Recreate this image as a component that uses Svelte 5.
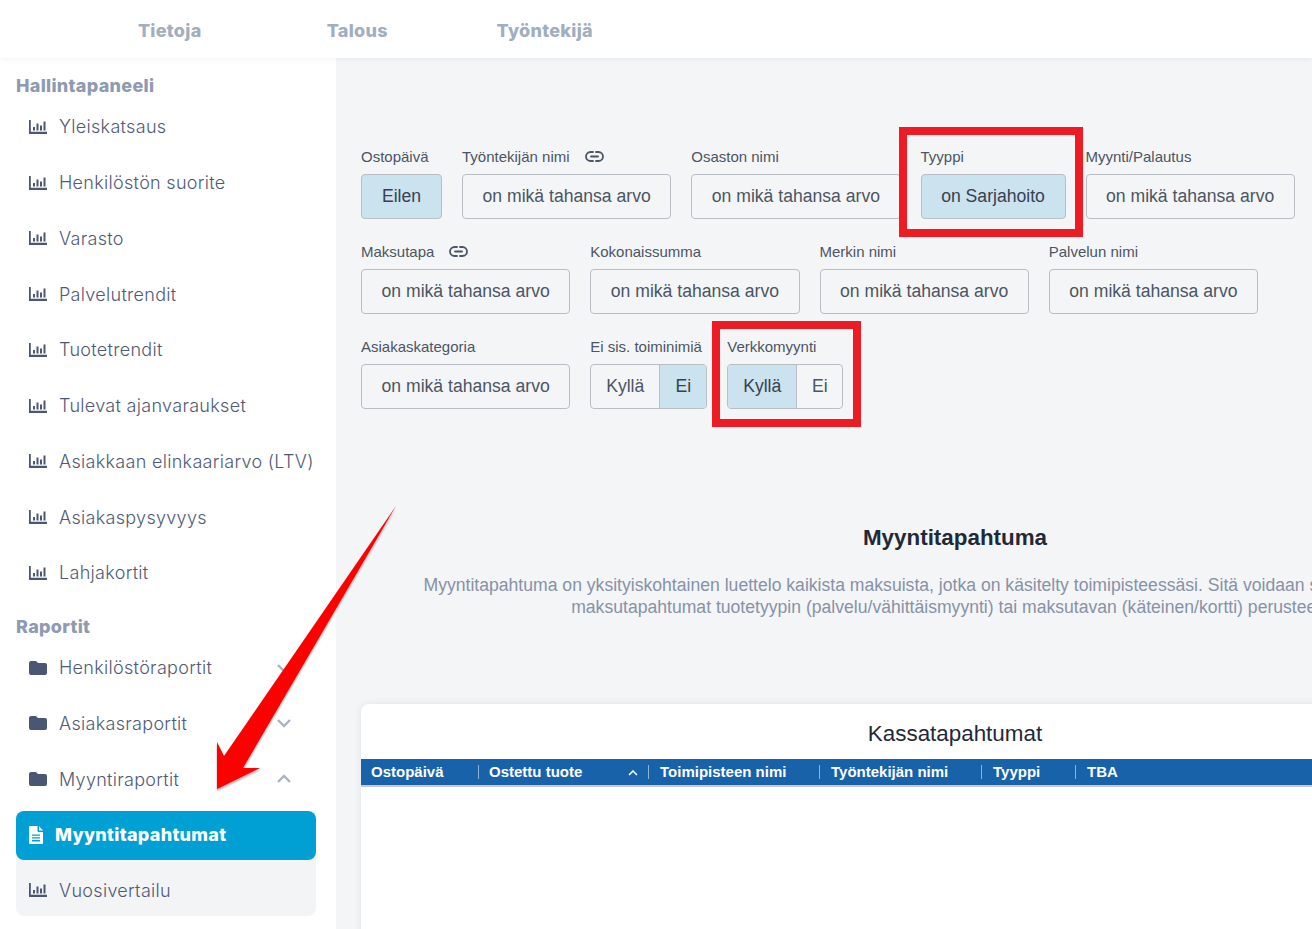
<script lang="ts">
	const tabs = ['Tietoja', 'Talous', 'Työntekijä'];
	const dashboards = [
		'Yleiskatsaus',
		'Henkilöstön suorite',
		'Varasto',
		'Palvelutrendit',
		'Tuotetrendit',
		'Tulevat ajanvaraukset',
		'Asiakkaan elinkaariarvo (LTV)',
		'Asiakaspysyvyys',
		'Lahjakortit'
	];
	const folders = [
		{ name: 'Henkilöstöraportit', open: false },
		{ name: 'Asiakasraportit', open: false },
		{ name: 'Myyntiraportit', open: true }
	];
	const any = 'on mikä tahansa arvo';
	const rows = [
		[
			{ label: 'Ostopäivä', value: 'Eilen', active: true, width: 81 },
			{ label: 'Työntekijän nimi', value: any, link: true },
			{ label: 'Osaston nimi', value: any },
			{ label: 'Tyyppi', value: 'on Sarjahoito', active: true, width: 145 },
			{ label: 'Myynti/Palautus', value: any }
		],
		[
			{ label: 'Maksutapa', value: any, link: true },
			{ label: 'Kokonaissumma', value: any },
			{ label: 'Merkin nimi', value: any },
			{ label: 'Palvelun nimi', value: any }
		]
	];
	const columns = [
		{ name: 'Ostopäivä', width: 117 },
		{ name: 'Ostettu tuote', width: 170, sorted: true },
		{ name: 'Toimipisteen nimi', width: 171 },
		{ name: 'Työntekijän nimi', width: 162 },
		{ name: 'Tyyppi', width: 94 },
		{ name: 'TBA', width: 120 }
	];
</script>

{#snippet chartIcon()}
	<svg class="icon" viewBox="0 0 18 14" width="18" height="14" aria-hidden="true">
		<path d="M0 0h1.800v11.800H18V14H0z" fill="currentColor" />
		<path d="M4 7h2v3.500H4zM7.500 3.500h2v7h-2zM11 5.500h2v5h-2zM14.500 1.500h2v9h-2z" fill="currentColor" />
	</svg>
{/snippet}

{#snippet linkIcon()}
	<svg class="link-icon" viewBox="0 0 19 11" width="19" height="11" aria-hidden="true">
		<path
			d="M8 1H5.500a4.500 4.500 0 0 0 0 9H8M11 1h2.500a4.500 4.500 0 0 1 0 9H11M6 5.500h7"
			fill="none"
			stroke="currentColor"
			stroke-width="1.800"
			stroke-linecap="round"
		/>
	</svg>
{/snippet}

{#snippet filter(f)}
	<div class="filter" style:width={f.width ? f.width + 'px' : null}>
		<div class="label">
			{f.label}
			{#if f.link}{@render linkIcon()}{/if}
		</div>
		<button class="value" class:active={f.active}>{f.value}</button>
	</div>
{/snippet}

{#snippet toggle(label, yes)}
	<div class="filter auto">
		<div class="label">{label}</div>
		<div class="toggle">
			<span class="yes" class:active={yes}>Kyllä</span>
			<span class="no" class:active={!yes}>Ei</span>
		</div>
	</div>
{/snippet}

<div class="page">
	<header class="topbar">
		{#each tabs as tab}
			<span class="tab">{tab}</span>
		{/each}
	</header>

	<div class="body">
		<aside class="sidebar">
			<h2>Hallintapaneeli</h2>
			{#each dashboards as item}
				<div class="item">{@render chartIcon()}<span>{item}</span></div>
			{/each}

			<h2 class="second">Raportit</h2>
			{#each folders as folder}
				<div class="item">
					<svg class="icon" viewBox="0 0 18 14" width="18" height="14" aria-hidden="true">
						<path
							d="M2 0h5l2 2h7a2 2 0 0 1 2 2v8a2 2 0 0 1-2 2H2a2 2 0 0 1-2-2V2a2 2 0 0 1 2-2z"
							fill="currentColor"
						/>
					</svg>
					<span>{folder.name}</span>
					<svg class="chevron" viewBox="0 0 16 10" width="16" height="10" aria-hidden="true">
						<path
							d={folder.open ? 'M2 8l6-6 6 6' : 'M2 2l6 6 6-6'}
							fill="none"
							stroke="currentColor"
							stroke-width="2.400"
						/>
					</svg>
				</div>
			{/each}

			<div class="subgroup">
				<div class="current">
					<svg viewBox="0 0 14 18" width="14" height="18" aria-hidden="true">
						<path
							d="M1 0h7.500v5a1 1 0 0 0 1 1H14v11a1 1 0 0 1-1 1H1a1 1 0 0 1-1-1V1a1 1 0 0 1 1-1zM10 0l4 4.500h-4zM3 8.500v1.300h8V8.500zM3 11.300v1.300h8v-1.300zM3 14.100v1.300h8v-1.300z"
							fill="#fff"
							fill-rule="evenodd"
						/>
					</svg>
					<span>Myyntitapahtumat</span>
				</div>
				<div class="item sub">{@render chartIcon()}<span>Vuosivertailu</span></div>
			</div>
		</aside>

		<main class="main">
			<section class="filters">
				{#each rows as row}
					<div class="filter-row">
						{#each row as f}{@render filter(f)}{/each}
					</div>
				{/each}
				<div class="filter-row">
					{@render filter({ label: 'Asiakaskategoria', value: any })}
					{@render toggle('Ei sis. toiminimiä', false)}
					{@render toggle('Verkkomyynti', true)}
				</div>
			</section>

			<section class="intro">
				<h1>Myyntitapahtuma</h1>
				<p>
					Myyntitapahtuma on yksityiskohtainen luettelo kaikista maksuista, jotka on käsitelty toimipisteessäsi. Sitä voidaan suodattamalla näyttää,<br />
					maksutapahtumat tuotetyypin (palvelu/vähittäismyynti) tai maksutavan (käteinen/kortti) perusteella.
				</p>
			</section>

			<section class="card">
				<div class="card-title">Kassatapahtumat</div>
				<div class="table-head">
					{#each columns as col}
						<div class="col" style:width="{col.width}px">
							{col.name}
							{#if col.sorted}
								<svg viewBox="0 0 10 6" width="10" height="6" aria-hidden="true">
									<path d="M1 5l4-4 4 4" fill="none" stroke="#fff" stroke-width="1.600" />
								</svg>
							{/if}
						</div>
					{/each}
				</div>
			</section>
		</main>
	</div>

	<div class="mark mark-type"></div>
	<div class="mark mark-online"></div>
	<svg class="arrow" viewBox="0 0 1312 929" width="1312" height="929" aria-hidden="true">
		<polygon points="396,506 243,768 260,768 217,789 217,742 224,756" fill="#fe0000" />
	</svg>
</div>

<style>
	:global(body) {
		margin: 0;
		background: #f4f5f7;
	}

	.page {
		position: relative;
		width: 1312px;
		height: 929px;
		overflow: hidden;
		font-family: 'Liberation Sans', Arial, sans-serif;
	}

	.topbar {
		position: relative;
		z-index: 1;
		display: flex;
		height: 58px;
		padding-left: 76px;
		align-items: center;
		background: #fff;
		box-shadow: 0 1px 6px rgba(0, 0, 0, 0.06);
	}

	.tab {
		width: 187.500px;
		margin-top: 3px;
		text-align: center;
		font-family: Inter, sans-serif;
		font-size: 18px;
		font-weight: 800;
		letter-spacing: 0.300px;
		color: #a0aec0;
	}

	.body {
		display: flex;
		height: 871px;
	}

	.sidebar {
		flex: none;
		width: 300px;
		padding: 16px 20px 0 16px;
		background: #fff;
		font-family: Inter, sans-serif;
	}

	h2 {
		margin: 0;
		height: 25px;
		line-height: 23px;
		font-size: 18px;
		font-weight: 800;
		letter-spacing: 0.300px;
		color: #8d9ab1;
	}

	h2.second {
		margin-top: 14px;
	}

	.item {
		display: flex;
		align-items: center;
		gap: 12px;
		height: 55.750px;
		padding-left: 13px;
		font-size: 18px;
		font-weight: 300;
		letter-spacing: 0.300px;
		color: #4f5b76;
		white-space: nowrap;
	}

	.icon {
		flex: none;
		color: #4a5672;
	}

	.chevron {
		position: absolute;
		left: 276px;
		color: #a9b3c3;
	}

	.subgroup {
		margin-top: 4px;
		border-radius: 8px;
		background: #f3f4f6;
	}

	.current {
		display: flex;
		align-items: center;
		gap: 12px;
		box-sizing: border-box;
		height: 49px;
		padding: 0 0 2px 13px;
		border-radius: 8px;
		background: #009fd4;
		font-size: 18px;
		font-weight: 800;
		letter-spacing: 0.300px;
		color: #fff;
	}

	.item.sub {
		box-sizing: border-box;
		height: 56px;
		padding-top: 4px;
	}

	.main {
		flex: none;
		width: 1188px;
		padding: 0 25px;
		color: #374151;
	}

	.filters {
		padding-top: 90px;
	}

	.filter-row {
		display: flex;
		gap: 20px;
		height: 95px;
	}

	.filter {
		width: 209.250px;
	}

	.filter.auto {
		width: auto;
	}

	.label {
		display: flex;
		align-items: center;
		gap: 15px;
		height: 16px;
		margin-bottom: 10px;
		font-size: 15px;
		color: #4b5563;
		white-space: nowrap;
	}

	.link-icon {
		color: #4b5563;
	}

	.value {
		display: block;
		width: 100%;
		height: 45px;
		padding: 0;
		border: 1px solid #b9bdc4;
		border-radius: 4px;
		background: transparent;
		font-family: inherit;
		font-size: 17.600px;
		color: #4b5563;
	}

	.active {
		background: #cbe2ef;
		color: #374151;
	}

	.toggle {
		display: flex;
		height: 43px;
		border: 1px solid #b9bdc4;
		border-radius: 4px;
		overflow: hidden;
		font-size: 17.600px;
		line-height: 43px;
		color: #4b5563;
	}

	.toggle span {
		text-align: center;
	}

	.toggle .yes {
		width: 68px;
		border-right: 1px solid #b9bdc4;
	}

	.toggle .no {
		width: 46px;
	}

	.filter:last-child .toggle .no {
		width: 45px;
	}

	.toggle .active {
		color: #374151;
	}

	.intro {
		margin-top: 91px;
		text-align: center;
	}

	.intro h1 {
		margin: 0 0 22px;
		font-size: 22.400px;
		line-height: 28px;
		font-weight: 700;
		color: #1f2937;
	}

	.intro p {
		margin: 0;
		font-size: 17.600px;
		line-height: 22px;
		color: #8792a6;
		white-space: nowrap;
	}

	.card {
		height: 300px;
		margin-top: 86px;
		border-radius: 8px 8px 0 0;
		background: #fff;
		box-shadow: 0 0 8px rgba(0, 0, 0, 0.08);
	}

	.card-title {
		height: 55px;
		line-height: 60px;
		text-align: center;
		font-size: 22.400px;
		color: #1f2937;
	}

	.table-head {
		display: flex;
		height: 26px;
		background: #1862a9;
		border-bottom: 2px solid #c5c9ce;
	}

	.col {
		position: relative;
		flex: none;
		box-sizing: border-box;
		padding-left: 11px;
		line-height: 26px;
		font-size: 15px;
		font-weight: 700;
		color: #fff;
	}

	.col:nth-child(n + 3) {
		padding-left: 12px;
	}

	.col::before {
		content: '';
		position: absolute;
		left: 0;
		top: 6px;
		height: 14px;
		border-left: 1px solid #8fb3d6;
	}

	.col:first-child {
		padding-left: 10px;
	}

	.col:first-child::before {
		display: none;
	}

	.col svg {
		position: absolute;
		right: 10px;
		top: 11px;
	}

	.mark {
		position: absolute;
		box-sizing: border-box;
		border: 8px solid #ed1c24;
	}

	.mark-type {
		left: 899px;
		top: 127px;
		width: 184px;
		height: 110px;
	}

	.mark-online {
		left: 712px;
		top: 321px;
		width: 149px;
		height: 106px;
	}

	.arrow {
		position: absolute;
		left: 0;
		top: 0;
		filter: drop-shadow(0 2px 1px rgba(0, 0, 0, 0.35));
	}
</style>
